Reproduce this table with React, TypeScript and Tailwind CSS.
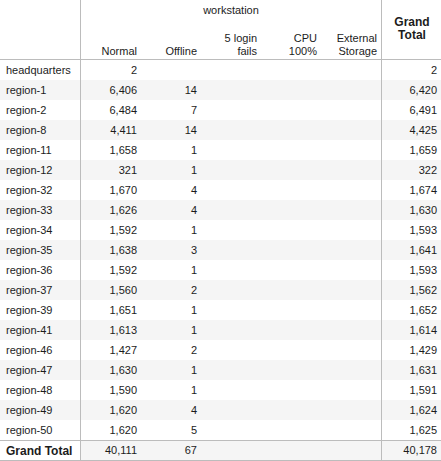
import React from "react";

const rows: [string, string, string, string][] = [
  ["headquarters", "2", "", "2"],
  ["region-1", "6,406", "14", "6,420"],
  ["region-2", "6,484", "7", "6,491"],
  ["region-8", "4,411", "14", "4,425"],
  ["region-11", "1,658", "1", "1,659"],
  ["region-12", "321", "1", "322"],
  ["region-32", "1,670", "4", "1,674"],
  ["region-33", "1,626", "4", "1,630"],
  ["region-34", "1,592", "1", "1,593"],
  ["region-35", "1,638", "3", "1,641"],
  ["region-36", "1,592", "1", "1,593"],
  ["region-37", "1,560", "2", "1,562"],
  ["region-39", "1,651", "1", "1,652"],
  ["region-41", "1,613", "1", "1,614"],
  ["region-46", "1,427", "2", "1,429"],
  ["region-47", "1,630", "1", "1,631"],
  ["region-48", "1,590", "1", "1,591"],
  ["region-49", "1,620", "4", "1,624"],
  ["region-50", "1,620", "5", "1,625"],
];

const cols = "grid grid-cols-[81px_60px_60px_60px_60px_60px_60px]";

export default function App() {
  return (
    <div
      className="w-[441px] h-[461px] bg-white text-[11px] text-[#1c1c1c] overflow-hidden"
      style={{ fontFamily: '"Liberation Sans", Arial, sans-serif' }}
    >
      {/* header */}
      <div className="flex h-[60px] border-b border-[#bcbcbc]">
        <div className="w-[81px] border-r border-[#bcbcbc]" />
        <div className="w-[300px] flex flex-col">
          <div className="h-[20px] flex items-center justify-center">workstation</div>
          <div className="flex-1 grid grid-cols-[60px_60px_60px_60px_60px] leading-[13px]">
            {[
              ["Normal"],
              ["Offline"],
              ["5 login", "fails"],
              ["CPU", "100%"],
              ["External", "Storage"],
            ].map((lines, i) => (
              <div key={i} className="flex flex-col justify-end items-end pr-[4px] pb-[1px] text-right">
                {lines.map((l) => (
                  <span key={l}>{l}</span>
                ))}
              </div>
            ))}
          </div>
        </div>
        <div className="w-[60px] border-l border-[#bcbcbc] flex flex-col items-center justify-center font-bold text-[12px] leading-[13px] pl-[1px] pb-[2px]">
          <span>Grand</span>
          <span>Total</span>
        </div>
      </div>
      {/* body */}
      {rows.map((r, i) => (
        <div key={r[0]} className={`${cols} h-[20px] items-center ${i % 2 === 1 ? "bg-[#f5f5f5]" : "bg-white"}`}>
          <div className="h-full flex items-center pl-[6px] border-r border-[#bcbcbc]">{r[0]}</div>
          <div className="text-right pr-[4px]">{r[1]}</div>
          <div className="text-right pr-[4px]">{r[2]}</div>
          <div />
          <div />
          <div />
          <div className="h-full flex items-center justify-end pr-[4px] border-l border-[#bcbcbc]">{r[3]}</div>
        </div>
      ))}
      <div className={`${cols} h-[21px] border-t border-b border-[#bcbcbc] items-center`}>
        <div className="h-full flex items-center pl-[6px] border-r border-[#bcbcbc] font-bold text-[12px] bg-white">
          Grand Total
        </div>
        <div className="h-full flex items-center justify-end pr-[4px] bg-[#f5f5f5]">40,111</div>
        <div className="h-full flex items-center justify-end pr-[4px] bg-[#f5f5f5]">67</div>
        <div className="h-full bg-[#f5f5f5]" />
        <div className="h-full bg-[#f5f5f5]" />
        <div className="h-full bg-[#f5f5f5]" />
        <div className="h-full flex items-center justify-end pr-[4px] border-l border-[#bcbcbc] bg-[#f5f5f5]">40,178</div>
      </div>
    </div>
  );
}
